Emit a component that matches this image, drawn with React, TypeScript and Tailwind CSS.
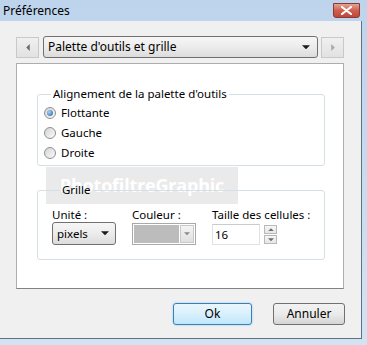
import React from 'react';

// Small triangles used by arrow buttons and combo boxes
const Tri: React.FC<{ dir: 'down' | 'up' | 'left' | 'right'; color: string; size?: number }> = ({ dir, color, size = 7 }) => {
  const pts = {
    down: '0,0 8,0 4,4',
    up: '0,4 8,4 4,0',
    left: '4,0 4,8 0,4',
    right: '0,0 0,8 4,4',
  }[dir];
  const vertical = dir === 'down' || dir === 'up';
  return (
    <svg width={vertical ? size : size / 2 + 0.5} height={vertical ? size / 2 + 0.5 : size} viewBox={vertical ? '0 0 8 4' : '0 0 4 8'}>
      <polygon points={pts} fill={color} />
    </svg>
  );
};

const Radio: React.FC<{ checked?: boolean; label: string }> = ({ checked, label }) => (
  <div className="flex items-center gap-[5px] h-[20px]">
    <span className="w-[12px] h-[12px] rounded-full border border-[#8e8f8f] bg-gradient-to-br from-[#d4d4d4] to-[#fbfbfb] flex items-center justify-center shrink-0">
      {checked && <span className="w-[6px] h-[6px] rounded-full bg-[radial-gradient(circle_at_35%_35%,#a9d3f5,#1d5e9f)]" />}
    </span>
    <span className="leading-[16px]">{label}</span>
  </div>
);

const NavButton: React.FC<{ dir: 'left' | 'right'; color: string }> = ({ dir, color }) => (
  <div className="w-[23px] h-[21px] border border-[#c9c9c9] bg-gradient-to-b from-[#f0f0f0] to-[#e2e2e2] flex items-center justify-center">
    <Tri dir={dir} color={color} size={7} />
  </div>
);

export default function App() {
  return (
    <div className="w-[367px] h-[345px] flex flex-col bg-gradient-to-b from-[#bdd4ec] to-[#d3e3f3] text-[11.5px] text-black font-['Noto_Sans',sans-serif] overflow-hidden">
      {/* Title bar */}
      <div className="h-[21px] flex items-center justify-between pl-[3px] pr-[7px] shrink-0">
        <span className="leading-[16px] text-[12px]">Préférences</span>
        <div className="w-[27px] h-[15px] rounded-b-[3px] border border-[#8a3a34] bg-gradient-to-b from-[#e4a395] via-[#cf5f4d] to-[#c1453a] flex items-center justify-center">
          <svg width="11" height="9" viewBox="0 0 11 9">
            <path d="M1 1 L10 8 M10 1 L1 8" stroke="#fff" strokeWidth="2.2" strokeLinecap="round" />
          </svg>
        </div>
      </div>

      {/* Client area */}
      <div className="flex-1 mr-[5px] mb-[6px] bg-[#f0f0f0] border-r border-b border-[#5f7285] pl-[16px] pr-[17px] pt-[15px] flex flex-col">
        {/* Page selector row */}
        <div className="flex items-center gap-[4px] h-[22px]">
          <NavButton dir="left" color="#6b6b6b" />
          <div className="w-[275px] h-[22px] rounded-[3px] border border-[#707070] bg-gradient-to-b from-[#f6f6f6] via-[#ececec] to-[#dcdcdc] flex items-center justify-between pl-[4px] pr-[7px]">
            <span className="leading-[16px] text-[12px]">Palette d'outils et grille</span>
            <Tri dir="down" color="#1a1a1a" size={8} />
          </div>
          <div className="ml-[-1px]">
            <NavButton dir="right" color="#a8a8a8" />
          </div>
        </div>

        {/* Page content */}
        <div className="relative mt-[5px] h-[226px] bg-white border border-[#adadad] border-b-[#828282] pl-[20px] pr-[18px] pt-[22px]">
          {/* Watermark, drawn under the page's controls */}
          <div className="absolute left-[29px] top-[103px] w-[192px] h-[37px] bg-[#dcdcdc]/60 flex items-center justify-center">
            <span className="text-[18px] font-bold tracking-[-0.2px] text-white font-['Open_Sans',sans-serif]">PhotofiltreGraphic</span>
          </div>

          <fieldset className="relative border border-[#d5dfe5] rounded-[3px] pl-[6px] pb-[2px]">
            <legend className="ml-[7px] px-[2px] leading-[16px]">Alignement de la palette d'outils</legend>
            <div className="pt-[1px]">
              <Radio checked label="Flottante" />
              <Radio label="Gauche" />
              <Radio label="Droite" />
            </div>
          </fieldset>

          <fieldset className="relative mt-[16px] border border-[#d5dfe5] rounded-[3px] pl-[14px] pb-[14px]">
            <legend className="ml-[8px] px-[2px] leading-[16px]">Grille</legend>
            <div className="pt-[9px] flex">
              <div className="w-[80px] flex flex-col">
                <span className="leading-[15px]">Unité :</span>
                <div className="w-[64px] h-[23px] rounded-[3px] border border-[#707070] bg-gradient-to-b from-[#f6f6f6] via-[#ececec] to-[#dcdcdc] flex items-center justify-between pl-[4px] pr-[6px]">
                  <span className="leading-[16px]">pixels</span>
                  <Tri dir="down" color="#1a1a1a" size={8} />
                </div>
              </div>
              <div className="w-[80px] flex flex-col">
                <span className="leading-[15px]">Couleur :</span>
                <div className="w-[64px] h-[22px] mt-[1px] border border-[#a9a9a9] bg-white flex items-stretch p-[1px] gap-[1px]">
                  <div className="flex-1 bg-[#bcbcbc]" />
                  <div className="w-[14px] border border-[#c9c9c9] bg-gradient-to-b from-[#f4f4f4] to-[#e0e0e0] flex items-center justify-center">
                    <Tri dir="down" color="#8a8a8a" size={6} />
                  </div>
                </div>
              </div>
              <div className="flex flex-col">
                <span className="leading-[15px]">Taille des cellules :</span>
                <div className="flex items-center gap-[4px] mt-[2px]">
                  <div className="w-[48px] h-[21px] border border-[#e0e2e8] border-t-[#c8cbd2] bg-white flex items-center pl-[2px]">
                    <span className="leading-[16px]">16</span>
                  </div>
                  <div className="flex flex-col gap-[1px]">
                    <div className="w-[13px] h-[9px] border border-[#b9b9b9] bg-gradient-to-b from-[#f7f7f7] to-[#e6e6e6] flex items-center justify-center">
                      <Tri dir="up" color="#6d6d6d" size={6} />
                    </div>
                    <div className="w-[13px] h-[9px] border border-[#b9b9b9] bg-gradient-to-b from-[#f7f7f7] to-[#e6e6e6] flex items-center justify-center">
                      <Tri dir="down" color="#6d6d6d" size={6} />
                    </div>
                  </div>
                </div>
              </div>
            </div>
          </fieldset>
        </div>

        {/* Dialog buttons */}
        <div className="mt-[14px] flex justify-end gap-[21px] mr-[-1px]">
          <div className="w-[79px] h-[22px] rounded-[3px] border border-[#3c7fb1] shadow-[0_0_2px_#7ec4ea] bg-gradient-to-b from-[#eaf6fd] via-[#d9f0fc] to-[#bee6fd] flex items-center justify-center">
            <span className="leading-[16px] text-[12px]">Ok</span>
          </div>
          <div className="w-[72px] h-[22px] rounded-[3px] border border-[#707070] bg-gradient-to-b from-[#f2f2f2] via-[#ebebeb] to-[#d5d5d5] flex items-center justify-center">
            <span className="leading-[16px] text-[12px]">Annuler</span>
          </div>
        </div>
      </div>
    </div>
  );
}
